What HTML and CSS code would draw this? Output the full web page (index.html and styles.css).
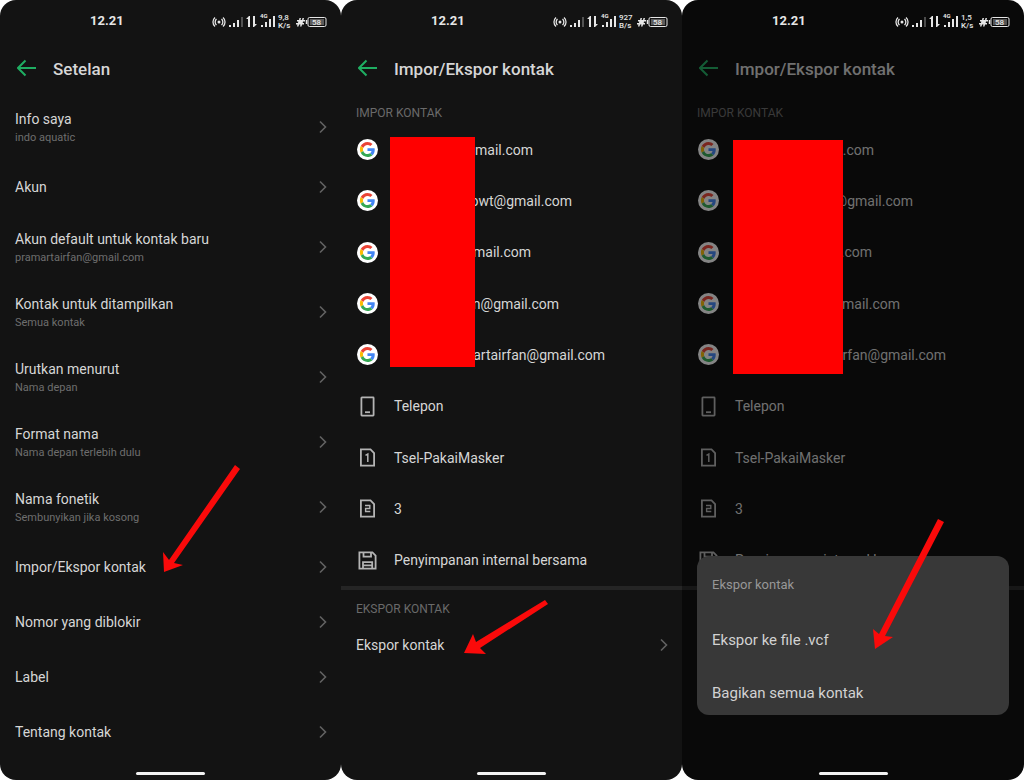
FILE: index.html
```
<!DOCTYPE html>
<html lang="id">
<head>
<meta charset="utf-8">
<meta name="viewport" content="width=device-width, initial-scale=1">
<title>Impor/Ekspor kontak</title>
<link rel="stylesheet" href="styles.css">
</head>
<body>
<svg class="sprite" aria-hidden="true">
  <symbol id="back" viewBox="0 0 20 18"><path d="M8.500 1.500 1 9l7.500 7.500M1 9h18" fill="none" stroke="currentColor" stroke-width="2"/></symbol>
  <symbol id="chevron" viewBox="0 0 8 14"><path d="M1 1.500 6.500 7 1 12.500" fill="none" stroke="currentColor" stroke-width="1.600"/></symbol>
  <symbol id="google" viewBox="0 0 72 72">
    <circle cx="36" cy="36" r="36" fill="#fff"/>
    <g transform="translate(10 10) scale(1.080)">
      <path fill="#EA4335" d="M24 9.500c3.540 0 6.710 1.220 9.210 3.600l6.850-6.850C35.900 2.380 30.470 0 24 0 14.620 0 6.510 5.380 2.560 13.220l7.980 6.190C12.430 13.720 17.740 9.500 24 9.500z"/>
      <path fill="#4285F4" d="M46.980 24.550c0-1.570-.150-3.090-.380-4.550H24v9.020h12.940c-.580 2.960-2.260 5.480-4.780 7.180l7.730 6c4.510-4.180 7.090-10.360 7.090-17.650z"/>
      <path fill="#FBBC05" d="M10.530 28.590c-.480-1.450-.760-2.990-.760-4.590s.270-3.140.760-4.590l-7.980-6.190C.920 16.460 0 20.120 0 24c0 3.880.920 7.540 2.560 10.780l7.970-6.190z"/>
      <path fill="#34A853" d="M24 48c6.480 0 11.930-2.130 15.890-5.810l-7.730-6c-2.150 1.450-4.920 2.300-8.160 2.300-6.260 0-11.570-4.220-13.470-9.910l-7.980 6.190C6.510 42.620 14.620 48 24 48z"/>
    </g>
  </symbol>
  <symbol id="phone" viewBox="0 0 21 21"><g fill="none" stroke="currentColor" stroke-width="1.800"><rect x="4.400" y="1.400" width="12.200" height="18.200" rx=".5"/><path d="M8 16.200h5"/></g></symbol>
  <symbol id="sim1" viewBox="0 0 21 21"><g fill="none" stroke="currentColor"><path stroke-width="1.800" d="M3.900 2.400h9.600l3.600 3.600v12.600H3.900z"/><path stroke-width="1.500" d="m8.500 8.300 2.300-1.300v8"/></g></symbol>
  <symbol id="sim2" viewBox="0 0 21 21"><g fill="none" stroke="currentColor"><path stroke-width="1.800" d="M3.900 2.400h9.600l3.600 3.600v12.600H3.900z"/><path stroke-width="1.400" d="M8 7.500h4.800v3H8.600v3h4.700"/></g></symbol>
  <symbol id="disk" viewBox="0 0 21 21"><g fill="none" stroke="currentColor" stroke-width="1.800"><path d="M2.400 2.400h13l3.200 3.200v13H2.400z"/><path d="M6.500 2.400v4.200h7.500V2.400M6 18.500v-6.300h9.200v6.300M6 15.400h9"/></g></symbol>
  <symbol id="radio" viewBox="0 0 116 20">
    <g fill="none" stroke="currentColor" stroke-width="1.300">
      <path d="M5.500 8a4 4 0 0 0 0 6M10.500 8a4 4 0 0 1 0 6M4 6.500a6 6 0 0 0 0 9M12 6.500a6 6 0 0 1 0 9"/>
    </g>
    <circle cx="8" cy="11" r="1.500" fill="currentColor"/>
    <g fill="currentColor">
      <path d="M18 14h2v2h-2zM22 12h2v4h-2zM26 9h2v7h-2z"/>
      <path opacity=".3" d="M30 6h2v10h-2z"/>
      <path d="M37 16V8h-2l3-3h1v11zM42 5h2v8h2l-3 3h-1z"/>
      <path d="M50 14h2v2h-2zM54 11h2v5h-2zM58 8h2v8h-2zM62 5h2v11h-2z"/>
      <path d="M86 9h2l.5-2h1.500l-.5 2H91l.5-2H93l-.5 2H94v1.500h-2l-.3 1.500H93V13.500h-2l-.5 2H89l.5-2H88l-.5 2H86l.5-2H85V12h2l.3-1.500H86z"/>
    </g>
    <rect x="97" y="6.500" width="18" height="9" rx="1.500" fill="none" stroke="currentColor"/>
    <path d="M95.500 9v4" stroke="currentColor" stroke-width="1.500"/>
    <path d="M99 8h14v6H99z" fill="currentColor" opacity=".35"/>
  </symbol>
</svg>

<main class="board">
  <section class="phone">
    <div class="status"><span class="clock">12.21</span>
      <svg class="signals" viewBox="0 0 116 20"><use href="#radio"/><text x="49" y="7" class="tiny">4G</text><text x="67" y="9" class="rate">9,8</text><text x="67" y="17" class="rate">K/s</text><text x="101" y="14" class="rate">58</text></svg>
    </div>
    <header class="bar"><button class="back" aria-label="Kembali"><svg><use href="#back"/></svg></button><h1>Setelan</h1></header>
    <nav class="settings">
      <a class="setting double" href="#"><span>Info saya<small>indo aquatic</small></span><svg class="chevron"><use href="#chevron"/></svg></a>
      <a class="setting" href="#"><span>Akun</span><svg class="chevron"><use href="#chevron"/></svg></a>
      <a class="setting double" href="#"><span>Akun default untuk kontak baru<small>pramartairfan@gmail.com</small></span><svg class="chevron"><use href="#chevron"/></svg></a>
      <a class="setting double" href="#"><span>Kontak untuk ditampilkan<small>Semua kontak</small></span><svg class="chevron"><use href="#chevron"/></svg></a>
      <a class="setting double" href="#"><span>Urutkan menurut<small>Nama depan</small></span><svg class="chevron"><use href="#chevron"/></svg></a>
      <a class="setting double" href="#"><span>Format nama<small>Nama depan terlebih dulu</small></span><svg class="chevron"><use href="#chevron"/></svg></a>
      <a class="setting double" href="#"><span>Nama fonetik<small>Sembunyikan jika kosong</small></span><svg class="chevron"><use href="#chevron"/></svg></a>
      <a class="setting" href="#"><span>Impor/Ekspor kontak</span><svg class="chevron"><use href="#chevron"/></svg></a>
      <a class="setting" href="#"><span>Nomor yang diblokir</span><svg class="chevron"><use href="#chevron"/></svg></a>
      <a class="setting" href="#"><span>Label</span><svg class="chevron"><use href="#chevron"/></svg></a>
      <a class="setting" href="#"><span>Tentang kontak</span><svg class="chevron"><use href="#chevron"/></svg></a>
    </nav>
    <div class="home"></div>
    <svg class="pointer pointer-settings" viewBox="0 0 80 110"><path d="M73 1 78 5 12 99 21 101 2 108 1 88 7 96z"/></svg>
  </section>

  <section class="phone">
    <div class="status"><span class="clock">12.21</span>
      <svg class="signals" viewBox="0 0 116 20"><use href="#radio"/><text x="49" y="7" class="tiny">4G</text><text x="67" y="9" class="rate">927</text><text x="67" y="17" class="rate">B/s</text><text x="101" y="14" class="rate">58</text></svg>
    </div>
    <header class="bar"><button class="back" aria-label="Kembali"><svg><use href="#back"/></svg></button><h1>Impor/Ekspor kontak</h1></header>
    <h2 class="label">IMPOR KONTAK</h2>
    <nav class="sources">
      <a class="source" href="#"><svg><use href="#google"/></svg><span class="mail mail-1">mail.com</span></a>
      <a class="source" href="#"><svg><use href="#google"/></svg><span class="mail mail-2">owt@gmail.com</span></a>
      <a class="source" href="#"><svg><use href="#google"/></svg><span class="mail mail-3">mail.com</span></a>
      <a class="source" href="#"><svg><use href="#google"/></svg><span class="mail mail-4">n@gmail.com</span></a>
      <a class="source" href="#"><svg><use href="#google"/></svg><span class="mail mail-5">artairfan@gmail.com</span></a>
      <a class="source" href="#"><svg><use href="#phone"/></svg><span>Telepon</span></a>
      <a class="source" href="#"><svg><use href="#sim1"/></svg><span>Tsel-PakaiMasker</span></a>
      <a class="source" href="#"><svg><use href="#sim2"/></svg><span>3</span></a>
      <a class="source" href="#"><svg><use href="#disk"/></svg><span>Penyimpanan internal bersama</span></a>
    </nav>
    <hr>
    <h2 class="label">EKSPOR KONTAK</h2>
    <a class="setting" href="#"><span>Ekspor kontak</span><svg class="chevron"><use href="#chevron"/></svg></a>
    <div class="home"></div>
    <div class="redaction redaction-narrow"></div>
    <svg class="pointer pointer-export" viewBox="0 0 86 56"><path d="M83 1 86 5 18 49 24 55 2 54 11 35 14 43z"/></svg>
  </section>

  <section class="phone dimmed">
    <div class="status"><span class="clock">12.21</span>
      <svg class="signals" viewBox="0 0 116 20"><use href="#radio"/><text x="49" y="7" class="tiny">4G</text><text x="67" y="9" class="rate">1,5</text><text x="67" y="17" class="rate">K/s</text><text x="101" y="14" class="rate">58</text></svg>
    </div>
    <header class="bar"><button class="back" aria-label="Kembali"><svg><use href="#back"/></svg></button><h1>Impor/Ekspor kontak</h1></header>
    <h2 class="label">IMPOR KONTAK</h2>
    <nav class="sources">
      <a class="source" href="#"><svg><use href="#google"/></svg><span class="mail mail-1">.com</span></a>
      <a class="source" href="#"><svg><use href="#google"/></svg><span class="mail mail-2">@gmail.com</span></a>
      <a class="source" href="#"><svg><use href="#google"/></svg><span class="mail mail-3">.com</span></a>
      <a class="source" href="#"><svg><use href="#google"/></svg><span class="mail mail-4">mail.com</span></a>
      <a class="source" href="#"><svg><use href="#google"/></svg><span class="mail mail-5">rfan@gmail.com</span></a>
      <a class="source" href="#"><svg><use href="#phone"/></svg><span>Telepon</span></a>
      <a class="source" href="#"><svg><use href="#sim1"/></svg><span>Tsel-PakaiMasker</span></a>
      <a class="source" href="#"><svg><use href="#sim2"/></svg><span>3</span></a>
      <a class="source" href="#"><svg><use href="#disk"/></svg><span>Penyimpanan internal bersama</span></a>
    </nav>
    <hr>
    <div class="home"></div>
    <div class="redaction redaction-wide"></div>
    <div class="sheet" role="dialog" aria-labelledby="sheet-title">
      <h2 id="sheet-title">Ekspor kontak</h2>
      <button>Ekspor ke file .vcf</button>
      <button>Bagikan semua kontak</button>
    </div>
    <svg class="pointer pointer-vcf" viewBox="0 0 74 132"><path d="M67 1 73 4 14 118 22 119 4 131 2 111 8 116z"/></svg>
  </section>
</main>
</body>
</html>
```
FILE: styles.css
```
* { box-sizing: border-box; }

body {
  margin: 0;
  background: #fff;
  color: #d6d6d6;
  font: 14px/20px Roboto, "Liberation Sans", sans-serif;
}

.sprite { position: absolute; width: 0; height: 0; }

.board {
  display: grid;
  grid-template-columns: 341fr 341fr 342fr;
  min-height: 100vh;
}

.phone {
  position: relative;
  display: flex;
  flex-direction: column;
  border-radius: 16px;
  background: #131313;
}

.status {
  display: flex;
  align-items: center;
  justify-content: space-between;
  height: 42px;
  padding: 0 14px 0 90px;
  color: #e6e6e6;
}

.clock { font-size: 13px; font-weight: 700; }
.signals { width: 116px; height: 20px; fill: currentColor; }
.tiny { font-size: 6px; font-weight: 700; }
.rate { font-size: 8px; font-weight: 500; }

.bar {
  display: flex;
  align-items: center;
  gap: 16px;
  height: 52px;
  padding-left: 17px;
}

.back {
  padding: 0;
  border: 0;
  background: none;
  color: #1fae62;
}

.back svg { display: block; width: 20px; height: 18px; }

h1 {
  margin: 0;
  padding-top: 2px;
  font-size: 17px;
  font-weight: 500;
}

a { color: inherit; text-decoration: none; }

.setting {
  display: flex;
  align-items: center;
  justify-content: space-between;
  height: 55px;
  padding: 0 14px 0 15px;
}

.double { height: 65px; }
.double span { padding-top: 3px; }

small {
  display: block;
  color: #6e6e6e;
  font-size: 11px;
  line-height: 18px;
}

.chevron { width: 8px; height: 14px; color: #626262; }

.label {
  margin: 8px 0 0;
  padding-left: 15px;
  color: #6a6a6a;
  font-size: 12px;
  font-weight: 400;
  line-height: 22px;
}

.sources {
  display: grid;
  grid-auto-rows: 1fr;
  height: 462px;
}

.source {
  display: flex;
  align-items: center;
  gap: 16px;
  padding-left: 16px;
}

.source svg { width: 21px; height: 21px; color: #b4b4b4; }

.mail { text-align: right; }
.mail-1 { width: 139px; }
.mail-2 { width: 178px; }
.mail-3 { width: 137px; }
.mail-4 { width: 165px; }
.mail-5 { width: 211px; }

hr {
  width: 100%;
  height: 4px;
  margin: 0;
  border: 0;
  background: #252525;
}

hr + .label + .setting { height: 50px; }

.home {
  width: 69px;
  height: 3px;
  margin: auto auto 5px;
  border-radius: 2px;
  background: #f2f2f2;
}

.dimmed { background: #090909; }
.dimmed .bar,
.dimmed .label,
.dimmed .sources,
.dimmed hr { opacity: .5; }

.redaction { position: absolute; background: #f00; }
.redaction-narrow { left: 49px; top: 137px; width: 85px; height: 230px; }
.redaction-wide { left: 51px; top: 140px; width: 110px; height: 234px; }

.sheet {
  position: absolute;
  right: 15px;
  bottom: 65px;
  left: 15px;
  display: grid;
  gap: 9px;
  overflow: hidden;
  border-radius: 12px;
  background: #383838;
}

.sheet h2 {
  margin: 0;
  padding: 19px 15px 14px;
  color: #979797;
  font-size: 13px;
  font-weight: 400;
}

.sheet button {
  height: 44px;
  padding: 0 15px;
  border: 0;
  background: none;
  color: #d2d2d2;
  font: inherit;
  font-size: 15px;
  text-align: left;
}

.pointer { position: absolute; fill: #fa0a0a; }
.pointer-settings { left: 162px; top: 464px; width: 80px; height: 110px; }
.pointer-export { left: 121px; top: 599px; width: 86px; height: 56px; }
.pointer-vcf { left: 189px; top: 518px; width: 74px; height: 132px; }
```
